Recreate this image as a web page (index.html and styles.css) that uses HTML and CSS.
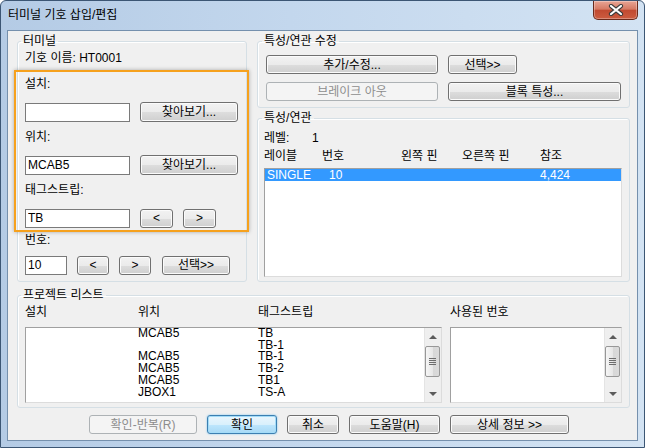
FILE: index.html
```html
<!DOCTYPE html>
<html lang="ko">

<head>
    <meta charset="UTF-8">
    <title>터미널 기호 삽입/편집</title>
    <link rel="stylesheet" href="styles.css">
</head>

<body>
    <div class="window">
        <div class="titlebar">
            <span class="title">터미널 기호 삽입/편집</span>
            <div class="close-btn">
                <svg width="16" height="12" viewBox="0 0 16 12">
                    <path d="M3 2 L13 10 M13 2 L3 10" stroke="#3b3b3b" stroke-width="4.2" stroke-linecap="round" />
                    <path d="M3 2 L13 10 M13 2 L3 10" stroke="#ffffff" stroke-width="2.2" stroke-linecap="round" />
                </svg>
            </div>
        </div>

        <div class="client">
            <div class="top-row">
                <fieldset class="group terminal">
                    <legend>터미널</legend>
                    <div class="text-line">기호 이름: HT0001</div>

                    <div class="highlight">
                        <div class="label">설치:</div>
                        <div class="field-row">
                            <input class="field wide" type="text" value="">
                            <button class="btn browse">찾아보기...</button>
                        </div>
                        <div class="label">위치:</div>
                        <div class="field-row">
                            <input class="field wide" type="text" value="MCAB5">
                            <button class="btn browse">찾아보기...</button>
                        </div>
                        <div class="label">태그스트립:</div>
                        <div class="field-row">
                            <input class="field wide" type="text" value="TB">
                            <button class="btn arrow">&lt;</button>
                            <button class="btn arrow">&gt;</button>
                        </div>
                    </div>

                    <div class="label num-label">번호:</div>
                    <div class="field-row num-row">
                        <input class="field short" type="text" value="10">
                        <button class="btn arrow small">&lt;</button>
                        <button class="btn arrow small">&gt;</button>
                        <button class="btn pick">선택&gt;&gt;</button>
                    </div>
                </fieldset>

                <div class="right-col">
                    <fieldset class="group edit">
                        <legend>특성/연관 수정</legend>
                        <div class="edit-grid">
                            <button class="btn">추가/수정...</button>
                            <button class="btn pick-edit">선택&gt;&gt;</button>
                            <button class="btn" disabled>브레이크 아웃</button>
                            <button class="btn">블록 특성...</button>
                        </div>
                    </fieldset>

                    <fieldset class="group assoc">
                        <legend>특성/연관</legend>
                        <div class="level"><span class="level-name">레벨:</span>1</div>
                        <div class="col-head">
                            <span>레이블</span>
                            <span>번호</span>
                            <span>왼쪽 핀</span>
                            <span>오른쪽 핀</span>
                            <span>참조</span>
                        </div>
                        <div class="assoc-list">
                            <div class="assoc-row selected">
                                <span>SINGLE</span>
                                <span>10</span>
                                <span>4,424</span>
                            </div>
                        </div>
                    </fieldset>
                </div>
            </div>

            <fieldset class="group project">
                <legend>프로젝트 리스트</legend>
                <div class="project-body">
                    <div>
                        <div class="proj-head">
                            <span>설치</span>
                            <span>위치</span>
                            <span>태그스트립</span>
                        </div>
                        <div class="proj-list">
                            <div class="list-rows">
                                <div class="list-row"><span></span><span>MCAB5</span><span>TB</span></div>
                                <div class="list-row"><span></span><span></span><span>TB-1</span></div>
                                <div class="list-row"><span></span><span>MCAB5</span><span>TB-1</span></div>
                                <div class="list-row"><span></span><span>MCAB5</span><span>TB-2</span></div>
                                <div class="list-row"><span></span><span>MCAB5</span><span>TB1</span></div>
                                <div class="list-row"><span></span><span>JBOX1</span><span>TS-A</span></div>
                            </div>
                            <div class="vscroll">
                                <div class="sb-arrow"><i class="tri up"></i></div>
                                <div class="sb-thumb"><i class="grip"></i></div>
                                <div class="sb-space"></div>
                                <div class="sb-arrow"><i class="tri down"></i></div>
                            </div>
                        </div>
                    </div>
                    <div>
                        <div class="proj-head-single">사용된 번호</div>
                        <div class="proj-list">
                            <div class="list-rows"></div>
                            <div class="vscroll">
                                <div class="sb-arrow"><i class="tri up"></i></div>
                                <div class="sb-thumb"><i class="grip"></i></div>
                                <div class="sb-space"></div>
                                <div class="sb-arrow"><i class="tri down"></i></div>
                            </div>
                        </div>
                    </div>
                </div>
            </fieldset>

            <div class="actions">
                <button class="btn act-repeat" disabled>확인-반복(R)</button>
                <button class="btn default act-ok">확인</button>
                <button class="btn act-cancel">취소</button>
                <button class="btn act-help">도움말(H)</button>
                <button class="btn act-more">상세 정보 &gt;&gt;</button>
            </div>
        </div>
    </div>
</body>

</html>
```

FILE: styles.css
```css
* {
    margin: 0;
    padding: 0;
    box-sizing: border-box;
}

body {
    background: #ffffff;
    font-family: "Liberation Sans", "Noto Sans CJK KR", sans-serif;
    font-size: 12px;
    color: #000000;
}

.window {
    width: 645px;
    height: 448px;
    display: flex;
    flex-direction: column;
    border: 1px solid #3c5674;
    border-radius: 6px 6px 0 0;
    background: linear-gradient(to right, #b4cbe5 0%, #c3d7ed 45%, #d3e3f3 100%);
}

.titlebar {
    height: 29px;
    display: flex;
    align-items: flex-start;
    justify-content: space-between;
}

.title {
    padding: 7px 0 0 7px;
    line-height: 14px;
}

.close-btn {
    width: 45px;
    height: 19px;
    margin-right: 6px;
    border: 1px solid #6a2a1c;
    border-top: none;
    border-radius: 0 0 5px 5px;
    background: linear-gradient(#e8a595 0%, #d67a64 45%, #c14a31 52%, #cc5c40 100%);
    box-shadow: inset 0 0 0 1px rgba(255, 255, 255, 0.3);
    display: flex;
    align-items: center;
    justify-content: center;
}

.client {
    flex: 1;
    margin: 0 6px 6px;
    border: 1px solid #7590ad;
    background: #f0f0f0;
    padding: 3px 7px 0 9px;
}

/* group boxes */
.group {
    border: 1px solid #d5dfe5;
    border-radius: 3px;
    min-width: 0;
    box-shadow: inset 1px 1px 0 #ffffff;
}

.group legend {
    margin-left: -4px;
    padding: 0 2px;
    line-height: 14px;
}

.top-row {
    display: grid;
    grid-template-columns: 230px 373px;
    column-gap: 10px;
}

.terminal {
    padding: 3px 8px 6px 7px;
}

.text-line,
.label {
    line-height: 14px;
}

.highlight {
    margin: 5px -11px 0;
    padding: 0 9px 2px;
    border: 2px solid #f6a11d;
    box-shadow: 0 0 4px rgba(0, 0, 0, 0.3);
}

.label {
    margin-top: 8px;
}

.highlight .label:first-child {
    margin-top: 5px;
}

.num-label {
    margin-top: 1px;
}

.field-row {
    display: flex;
    align-items: center;
    gap: 10px;
    height: 20px;
    margin-top: 11px;
}

.num-row {
    margin-top: 8px;
}

.field {
    height: 19px;
    border: 1px solid #7a7a7a;
    background: #ffffff;
    font: inherit;
    color: #000;
    padding: 0 2px;
    outline: none;
}

.field.wide {
    width: 105px;
}

.field.short {
    width: 42px;
}

/* buttons */
.btn {
    height: 19px;
    border: 1px solid #707070;
    border-radius: 3px;
    background: linear-gradient(#f2f2f2 0%, #ebebeb 50%, #dddddd 51%, #cfcfcf 100%);
    box-shadow: inset 0 0 0 1px #fbfbfb;
    font: inherit;
    color: #000;
    line-height: 14px;
    display: flex;
    align-items: center;
    justify-content: center;
}

.btn:disabled {
    border-color: #adb2b5;
    background: #f4f4f4;
    box-shadow: none;
    color: #8d8d8d;
}

.btn.default {
    border-color: #3c7fb1;
    background: linear-gradient(#eaf6fd 0%, #d9f0fc 50%, #bee6fd 51%, #a7d9f5 100%);
    box-shadow: inset 0 0 0 1px #a3dcf8, 0 0 2px #6fc2f0;
}

.browse {
    width: 98px;
    height: 20px;
}

.arrow {
    width: 33px;
}

.arrow.small {
    width: 32px;
}

.pick {
    width: 68px;
    margin-left: 1px;
}

.right-col {
    display: flex;
    flex-direction: column;
    gap: 3px;
}

.edit {
    padding: 7px 8px 6px 8px;
}

.edit-grid {
    display: grid;
    grid-template-columns: 172px 173px;
    column-gap: 10px;
    row-gap: 8px;
}

.pick-edit {
    width: 69px;
}

.assoc {
    flex: 1;
    display: flex;
    flex-direction: column;
    padding: 6px 7px 4px 6px;
}

.assoc legend {
    margin-left: -2px;
}

.level {
    line-height: 14px;
}

.level-name {
    display: inline-block;
    width: 48px;
}

.col-head {
    display: grid;
    grid-template-columns: 58px 79px 61px 78px auto;
    line-height: 14px;
    margin-top: 4px;
}

.assoc-list {
    flex: 1;
    margin-top: 5px;
    background: #ffffff;
    border: 1px solid;
    border-color: #a0a0a0 #dcdcdc #dcdcdc #a0a0a0;
}

.assoc-row {
    display: grid;
    grid-template-columns: 62px 211px auto;
    padding-left: 2px;
    line-height: 12px;
}

.assoc-row.selected {
    background: #3399ff;
    color: #ffffff;
}

/* project list */
.project {
    margin-top: 6px;
    padding: 3px 7px 4px 7px;
}

.project-body {
    display: grid;
    grid-template-columns: 417px 172px;
    column-gap: 8px;
}

.proj-head {
    display: grid;
    grid-template-columns: 113px 120px auto;
    line-height: 14px;
}

.proj-head-single {
    line-height: 14px;
}

.proj-list {
    height: 76px;
    margin-top: 8px;
    display: flex;
    background: #ffffff;
    border: 1px solid;
    border-color: #a0a0a0 #dcdcdc #dcdcdc #a0a0a0;
}

.list-rows {
    flex: 1;
    overflow: hidden;
}

.list-row {
    display: grid;
    grid-template-columns: 112px 120px auto;
    line-height: 11.7px;
}

.vscroll {
    width: 17px;
    display: flex;
    flex-direction: column;
    background: #efefef;
    border-left: 1px solid #e4e4e4;
}

.sb-arrow {
    height: 17px;
    display: flex;
    align-items: center;
    justify-content: center;
}

.tri {
    width: 0;
    height: 0;
    border-left: 4px solid transparent;
    border-right: 4px solid transparent;
}

.tri.up {
    border-bottom: 4px solid #5c5c5c;
}

.tri.down {
    border-top: 4px solid #5c5c5c;
}

.sb-thumb {
    height: 31px;
    margin: 1px 1px 0 0;
    border: 1px solid #979797;
    border-radius: 2px;
    background: linear-gradient(to right, #f6f6f6, #e7e7e7 50%, #d7d7d7 51%, #dadada);
    display: flex;
    align-items: center;
    justify-content: center;
}

.grip {
    width: 7px;
    height: 7px;
    background: repeating-linear-gradient(#6c6c6c 0 1px, transparent 1px 2px);
}

.sb-space {
    flex: 1;
}

/* dialog buttons */
.actions {
    display: flex;
    gap: 10px;
    margin-top: 7px;
    padding-left: 72px;
}

.act-repeat {
    width: 108px;
}

.act-ok {
    width: 70px;
}

.act-cancel {
    width: 52px;
}

.act-help {
    width: 91px;
}

.act-more {
    width: 119px;
}
```
